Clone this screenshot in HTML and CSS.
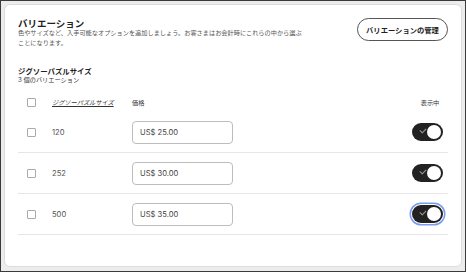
FILE: index.html
```html
<!DOCTYPE html>
<html lang="ja">
<head>
  <meta charset="UTF-8" />
  <meta name="viewport" content="width=device-width, initial-scale=1.0" />
  <title>バリエーション</title>
  <link rel="stylesheet" href="styles.css">
</head>
<body>
  <div class="frame">
    <div class="card">
      <div class="head">
        <div class="head-text">
          <h2>バリエーション</h2>
          <p class="desc">色やサイズなど、入手可能なオプションを追加しましょう。お客さまはお会計時にこれらの中から選ぶことになります。</p>
        </div>
        <button class="manage-btn">バリエーションの管理</button>
      </div>

      <h3>ジグソーパズルサイズ</h3>
      <p class="count">3 個のバリエーション</p>

      <div class="row header-row">
        <span class="check"></span>
        <span class="col-size">ジグソーパズルサイズ</span>
        <span class="col-price">価格</span>
        <span></span>
        <span class="col-show">表示中</span>
      </div>

      <div class="row item">
        <span class="check"></span>
        <span class="size">120</span>
        <div class="price-input">US$ 25.00</div>
        <span></span>
        <span class="toggle"></span>
      </div>
      <div class="row item">
        <span class="check"></span>
        <span class="size">252</span>
        <div class="price-input">US$ 30.00</div>
        <span></span>
        <span class="toggle"></span>
      </div>
      <div class="row item">
        <span class="check"></span>
        <span class="size">500</span>
        <div class="price-input">US$ 35.00</div>
        <span></span>
        <span class="toggle focus"></span>
      </div>
    </div>
  </div>
</body>
</html>
```

FILE: styles.css
```css
* {
  box-sizing: border-box;
}
body {
  margin: 0;
  font-family: "Inter", "Noto Sans CJK JP", sans-serif;
  color: #222;
}
.frame {
  width: 466px;
  height: 272px;
  border: 1px solid #3a3a3a;
  background: #ececec;
  padding: 3px 3px 4px 3px;
}
.card {
  height: 100%;
  background: #fff;
  border: 1px solid #dcdcdc;
  border-radius: 6px;
  padding: 13px 13px 0 13px;
}
.head {
  display: flex;
  justify-content: space-between;
  align-items: flex-start;
}
h2 {
  margin: 0;
  font-size: 9.5px;
  line-height: 12px;
  font-weight: 700;
}
.desc {
  margin: -2px 0 0 0;
  width: 288px;
  font-size: 6.2px;
  line-height: 10px;
  color: #555;
}
.manage-btn {
  width: 91px;
  height: 23px;
  border: 1px solid #555;
  border-radius: 12px;
  background: #fff;
  font-family: "Noto Sans CJK JP", sans-serif;
  font-size: 7.3px;
  font-weight: 700;
  color: #222;
  padding: 0;
}
h3 {
  margin: 19px 0 0 0;
  font-size: 7.4px;
  line-height: 9px;
  font-weight: 700;
}
.count {
  margin: 0;
  font-size: 6.2px;
  line-height: 8px;
  color: #333;
}
.row {
  display: grid;
  grid-template-columns: 34px 80px 101px 1fr 36px;
  align-items: center;
}
.header-row {
  margin-top: 9px;
  height: 19px;
  font-size: 6.2px;
  color: #333;
}
.col-size {
  text-decoration: underline;
  font-style: italic;
}
.col-show {
  text-align: center;
}
.check {
  width: 9px;
  height: 9px;
  margin-left: 9px;
  border: 1px solid #aaa;
  border-radius: 1px;
}
.item {
  height: 41px;
  border-bottom: 1px solid #e6e6e6;
}
.size {
  font-size: 7.6px;
  color: #555;
}
.price-input {
  height: 23px;
  border: 1px solid #bdbdbd;
  border-radius: 4px;
  padding-left: 7px;
  font-size: 7.6px;
  line-height: 21px;
  color: #444;
}
.toggle {
  position: relative;
  width: 31px;
  height: 18px;
  border-radius: 9px;
  background: #222;
}
.toggle::before {
  content: "";
  position: absolute;
  left: 8px;
  top: 5px;
  width: 5px;
  height: 3px;
  border-left: 1.2px solid #999;
  border-bottom: 1.2px solid #999;
  transform: rotate(-45deg);
}
.toggle::after {
  content: "";
  position: absolute;
  right: 2px;
  top: 2px;
  width: 14px;
  height: 14px;
  border-radius: 50%;
  background: #fff;
}
.toggle.focus {
  box-shadow: 0 0 0 1px #fff, 0 0 0 2.5px #7b9bf0;
}
```
